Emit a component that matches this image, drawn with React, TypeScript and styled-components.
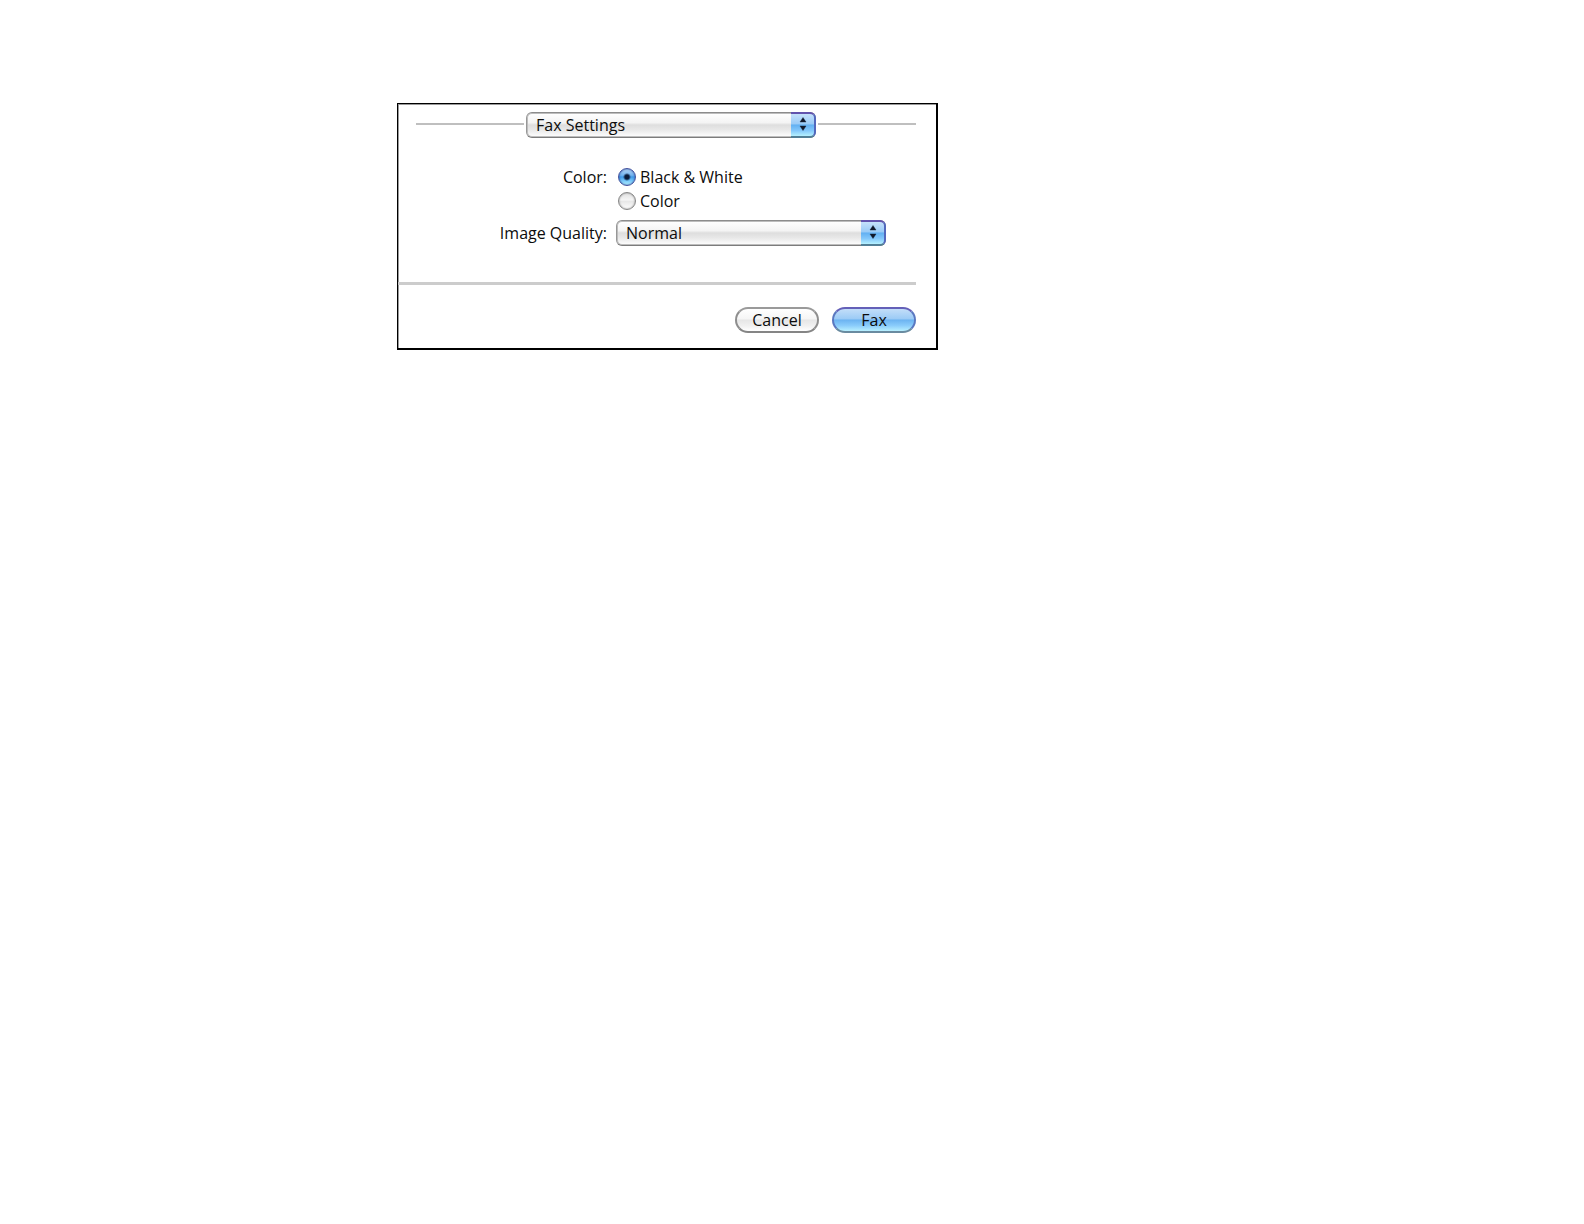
import * as React from 'react'
import styled, { createGlobalStyle } from 'styled-components'

const PopUp = ({ id, label, options }: { id: string; label?: string; options: string[] }) => (
  <PopUpWrap>
    <PopUpSelect id={id} aria-label={label}>
      {options.map((option) => (
        <option key={option}>{option}</option>
      ))}
    </PopUpSelect>
    <PopUpCap>
      <svg width="8" height="16" viewBox="0 0 8 16" aria-hidden="true">
        <path d="M4 1.5L7 6H1zM4 14.5L1 10H7z" fill="#10182c" stroke="#10182c" strokeWidth="0.4" />
      </svg>
    </PopUpCap>
  </PopUpWrap>
)

export default function App() {
  const [color, setColor] = React.useState('bw')

  return (
    <Page>
      <GlobalStyle />
      <Panel>
        <Header>
          <Rule />
          <PopUp id="pane" label="Settings pane" options={['Fax Settings']} />
          <Rule />
        </Header>

        <Settings>
          <Label as="span" id="color-label" $top>
            Color:
          </Label>
          <div role="radiogroup" aria-labelledby="color-label">
            <Option>
              <Radio name="color" checked={color === 'bw'} onChange={() => setColor('bw')} />
              Black &amp; White
            </Option>
            <Option>
              <Radio name="color" checked={color === 'color'} onChange={() => setColor('color')} />
              Color
            </Option>
          </div>
          <Label htmlFor="quality">Image Quality:</Label>
          <PopUp id="quality" options={['Normal']} />
        </Settings>

        <Divider />

        <Actions>
          <Button type="button">Cancel</Button>
          <Button type="submit" $primary>
            Fax
          </Button>
        </Actions>
      </Panel>
    </Page>
  )
}

const GlobalStyle = createGlobalStyle`
  body {
    margin: 0;
    background: #fff;
  }

  * {
    box-sizing: border-box;
  }

  body,
  button,
  select {
    color: #0c0c0c;
    font-family: 'Open Sans', 'Noto Sans', sans-serif;
    font-size: 16px;
    font-weight: 500;
    line-height: 24px;
  }
`

const Page = styled.main`
  padding: 103px 20px 20px 397px;
`

const Panel = styled.form`
  max-width: 541px;
  padding: 8px 0 15px;
  border: solid #000;
  border-width: 1px 2px 2px 1px;
  box-shadow: inset 1px 1px #999;
`

const Header = styled.div`
  display: grid;
  grid-template-columns: 108px 290px 1fr;
  gap: 2px;
  align-items: center;
  padding: 0 20px 0 18px;
`

const Rule = styled.span`
  height: 2px;
  margin-bottom: 2px;
  background: #bfbfbf;
`

const PopUpWrap = styled.div`
  display: flex;
  position: relative;
  height: 26px;
`

const PopUpSelect = styled.select`
  appearance: none;
  flex: 1;
  height: 26px;
  margin: 0;
  padding: 0 32px 2px 9px;
  border: 1px solid;
  border-color: #8c8c8c #979797 #7c7c7c;
  border-radius: 6px;
  background: linear-gradient(#fff, #f4f4f4 40%, #dedede 50%, #e8e8e8 70%, #fff);
  box-shadow: inset 0 0 0 1px #bdbdbd;
`

const PopUpCap = styled.span`
  position: absolute;
  top: 0;
  right: 0;
  display: flex;
  align-items: center;
  justify-content: center;
  width: 25px;
  height: 26px;
  padding-bottom: 2px;
  border: solid;
  border-width: 2px 2px 2px 0;
  border-color: #6253ad #5268bd #527f96;
  border-radius: 0 6px 6px 0;
  background: linear-gradient(#c5e1fb, #9acbf7 45%, #62b0f2 50%, #83c7fb 75%, #b5f1ff);
  pointer-events: none;
`

const Settings = styled.div`
  display: grid;
  grid-template-columns: 209px 270px;
  gap: 7px 9px;
  margin-top: 27px;
`

const Label = styled.label<{ $top?: boolean }>`
  align-self: ${(p) => (p.$top ? 'start' : 'center')};
  text-align: right;
`

const Option = styled.label`
  display: flex;
  align-items: center;
  gap: 4px;
  height: 24px;
`

const Radio = styled.input.attrs({ type: 'radio' })`
  appearance: none;
  width: 18px;
  height: 18px;
  margin: 0 0 0 2px;
  border: 1px solid #858585;
  border-radius: 50%;
  background: linear-gradient(#e2e2e2, #f6f6f6 45%, #e6e6e6 50%, #fff);
  box-shadow: inset 0 0 2px #888;

  &:checked {
    border-color: #3f4f9c;
    background:
      radial-gradient(circle, #0b1a38 2px, transparent 4px),
      linear-gradient(#b9d7f6, #6fb1ee 40%, #3f99e8 50%, #7bcbfb 75%, #b9f4ff);
    box-shadow: inset 0 0 2px #234b9c;
  }
`

const Divider = styled.hr`
  height: 3px;
  margin: 36px 20px 22px 0;
  border: 0;
  background: #ccc;
`

const Actions = styled.div`
  display: flex;
  justify-content: flex-end;
  gap: 13px;
  padding-right: 20px;
`

const Button = styled.button<{ $primary?: boolean }>`
  width: 84px;
  height: 26px;
  padding: 0;
  border: 2px solid;
  border-color: ${(p) => (p.$primary ? '#6460b8 #5a78c0 #6a8ba0' : '#9a9a9a #8e8e8e #858585')};
  border-radius: 13px;
  background: ${(p) =>
    p.$primary
      ? 'linear-gradient(#c3def9, #9ccbf6 45%, #6cb3f1 50%, #8accfb 75%, #b8f0ff)'
      : 'linear-gradient(#fff, #f5f5f5 45%, #e6e6e6 50%, #f0f0f0 75%, #fff)'};
  line-height: 22px;
`
